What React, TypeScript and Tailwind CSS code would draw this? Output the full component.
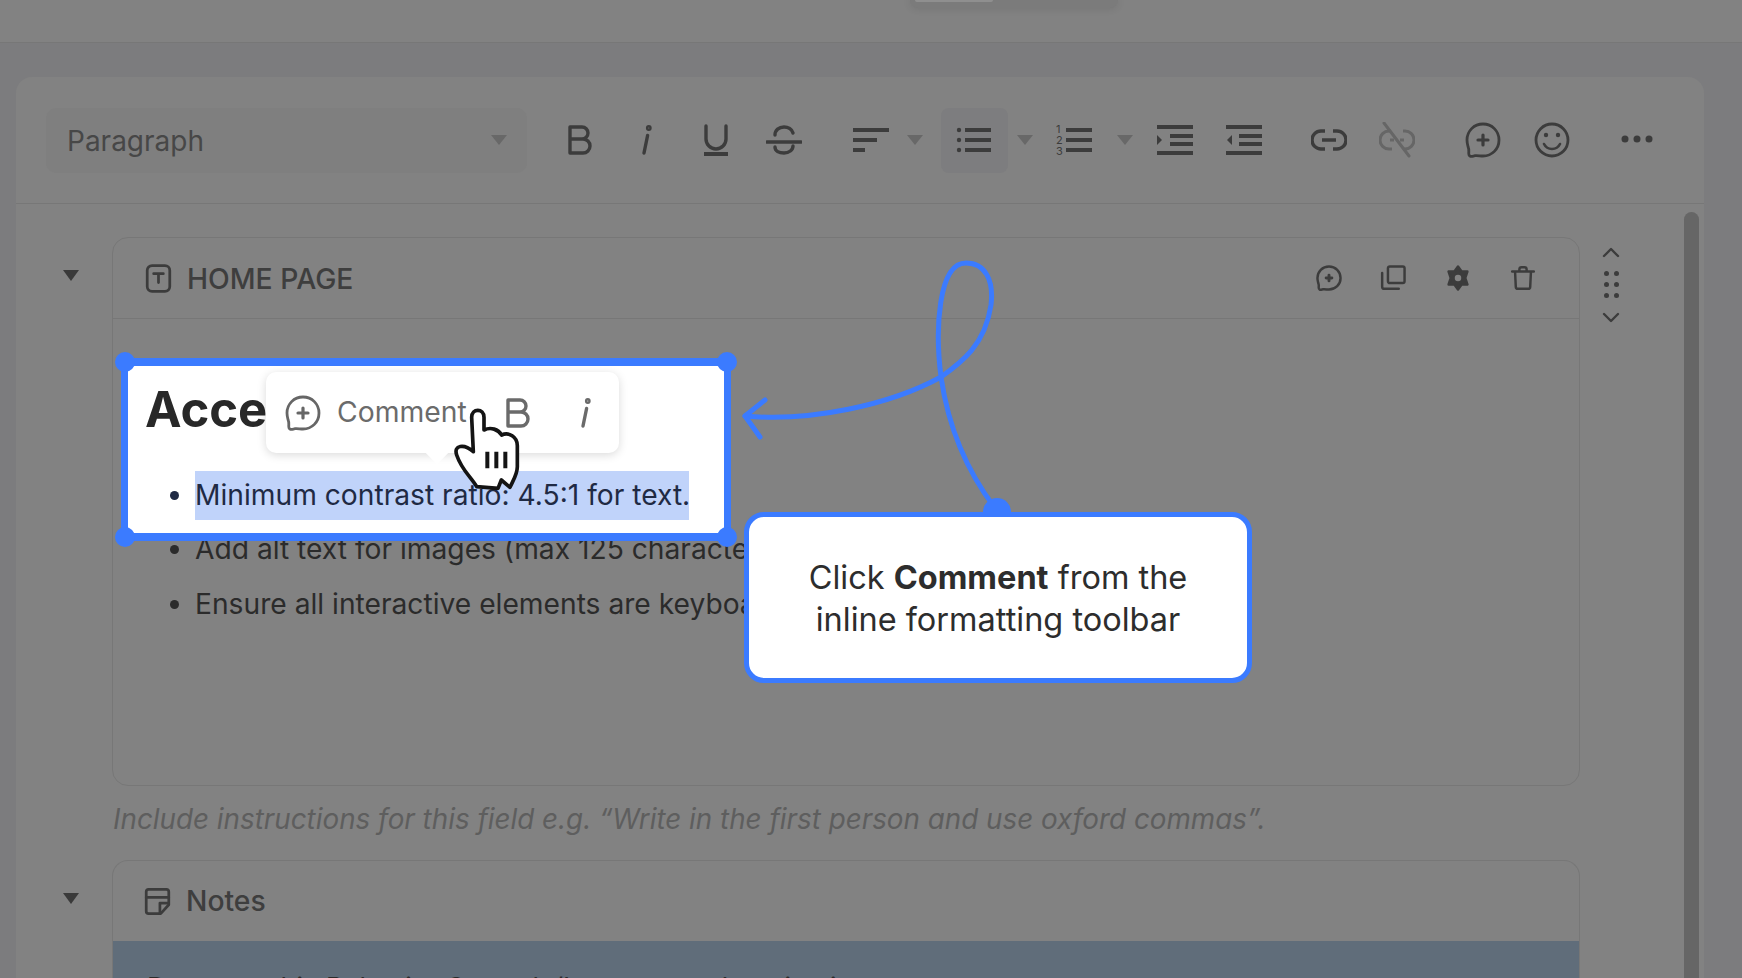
import { ReactNode } from 'react';

const INK = '#3c3c3c';
const BLUE = '#3b7bff';

function Icon({ size = 36, className, children, color = INK }: { size?: number; className?: string; children: ReactNode; color?: string }) {
  return (
    <svg
      width={size}
      height={size}
      viewBox="0 0 36 36"
      fill="none"
      stroke={color}
      strokeWidth={3.4}
      strokeLinecap="round"
      strokeLinejoin="round"
      className={`shrink-0 ${className ?? ''}`}
    >
      {children}
    </svg>
  );
}

function Caret({ className }: { className?: string }) {
  return (
    <svg width={16} height={10} viewBox="0 0 16 10" className={`shrink-0 ${className ?? ''}`}>
      <path d="M0 0h16L8 10z" fill="#686868" />
    </svg>
  );
}

const Bar = ({ x, y, w }: { x: number; y: number; w: number }) => <rect x={x} y={y} width={w} height={4} fill={INK} stroke="none" />;

const BoldGlyph = () => <path d="M8 5v26h13a7 7 0 0 0 0-14H8m0 0V5h12a6 6 0 0 1 0 12" />;

const ItalicGlyph = () => (
  <>
    <path d="M20.6 13.5 17 31" />
    <circle cx={21.8} cy={6} r={1.2} />
  </>
);

const BUBBLE = 'M18 2c9 0 16 7 16 16s-7 16-16 16c-3 0-5.500-.6-8-.3-2 .3-3.500 1-5 .4-1.600-.8-1.400-2.800-1.200-4.600.2-1.800 0-3-.8-5C2.500 22.500 2 20 2 18 2 9 9 2 18 2z';

function CommentGlyph() {
  return (
    <>
      <path d={BUBBLE} strokeWidth={2.8} />
      <path d="M18 13v10M13 18h10" strokeWidth={3.2} />
    </>
  );
}

function Toolbar() {
  return (
    <div className="flex h-[127px] items-center border-b border-[#777777] pl-[30px]">
      <div className="flex h-[65px] w-[481px] shrink-0 items-center justify-between rounded-[10px] bg-[#7f7f7f] pl-[21px] pr-[20px]">
        <span className="pt-[2px] text-[28px] text-[#474747]">Paragraph</span>
        <Caret />
      </div>
      <Icon className="ml-[35px]"><BoldGlyph /></Icon>
      <Icon className="ml-[29px]"><ItalicGlyph /></Icon>
      <Icon className="ml-[35px]">
        <path d="M8 4v13a10 10 0 0 0 20 0V4" />
        <Bar x={6} y={30} w={24} />
      </Icon>
      <Icon className="ml-[32px]">
        <path d="M27 11c-1-4-5-6-9-6-5 0-9 3-9 8M9 25c0 4 4 6 9 6s9-3 9-7" />
        <path d="M1 20h34" />
      </Icon>
      <Icon className="ml-[51px]">
        <Bar x={0} y={6} w={36} />
        <Bar x={0} y={16} w={24} />
        <Bar x={0} y={26} w={12} />
      </Icon>
      <Caret className="ml-[18px]" />
      <div className="ml-[18px] flex h-[65px] w-[67px] shrink-0 items-center justify-center rounded-[8px] bg-[#7d7d7f] pr-[4px]">
        <Icon>
          <circle cx={4} cy={8} r={2.200} fill={INK} stroke="none" />
          <circle cx={4} cy={18} r={2.200} fill={INK} stroke="none" />
          <circle cx={4} cy={28} r={2.200} fill={INK} stroke="none" />
          <Bar x={10} y={6} w={26} />
          <Bar x={10} y={16} w={26} />
          <Bar x={10} y={26} w={26} />
        </Icon>
      </div>
      <Caret className="ml-[9px]" />
      <Icon className="ml-[23px]">
        <text x={0} y={11} fontSize={11} fill={INK} stroke="none" fontFamily="Inter, sans-serif">1</text>
        <text x={0} y={22} fontSize={11} fill={INK} stroke="none" fontFamily="Inter, sans-serif">2</text>
        <text x={0} y={33} fontSize={11} fill={INK} stroke="none" fontFamily="Inter, sans-serif">3</text>
        <Bar x={10} y={6} w={26} />
        <Bar x={10} y={16} w={26} />
        <Bar x={10} y={26} w={26} />
      </Icon>
      <Caret className="ml-[25px]" />
      <Icon className="ml-[24px]">
        <Bar x={0} y={3} w={36} />
        <Bar x={13} y={12} w={23} />
        <Bar x={13} y={20} w={23} />
        <Bar x={0} y={29} w={36} />
        <path d="M0 13l5 5-5 5z" fill={INK} stroke="none" />
      </Icon>
      <Icon className="ml-[33px]">
        <Bar x={0} y={3} w={36} />
        <Bar x={13} y={12} w={23} />
        <Bar x={13} y={20} w={23} />
        <Bar x={0} y={29} w={36} />
        <path d="M6 13l-5 5 5 5z" fill={INK} stroke="none" />
      </Icon>
      <Icon className="ml-[49px]">
        <path d="M14 9H10a9 9 0 0 0 0 18h4M22 9h4a9 9 0 0 1 0 18h-4M11 18h14" strokeLinecap="butt" />
      </Icon>
      <Icon className="ml-[32px]" color="#666666">
        <path d="M12 9H10a9 9 0 0 0 0 18h3M24 9h2a9 9 0 0 1 0 18h-2M11 18h4M21 18h4" strokeLinecap="butt" strokeWidth={3} />
        <path d="M5 1l25 33" strokeWidth={3} />
      </Icon>
      <Icon className="ml-[50px]"><CommentGlyph /></Icon>
      <Icon className="ml-[33px]">
        <circle cx={18} cy={18} r={16} strokeWidth={2.8} />
        <circle cx={12} cy={13} r={2.200} fill={INK} stroke="none" />
        <circle cx={24} cy={13} r={2.200} fill={INK} stroke="none" />
        <path d="M10 22c2 4 5 5 8 5s6-1 8-5" strokeWidth={2.6} />
      </Icon>
      <Icon className="ml-[49px]">
        <circle cx={6} cy={17} r={3.500} fill={INK} stroke="none" />
        <circle cx={18} cy={17} r={3.500} fill={INK} stroke="none" />
        <circle cx={30} cy={17} r={3.500} fill={INK} stroke="none" />
      </Icon>
    </div>
  );
}

function Triangle({ className }: { className?: string }) {
  return (
    <svg width={16} height={11} viewBox="0 0 16 11" className={className}>
      <path d="M0 0h16L8 11z" fill="#3a3a3a" />
    </svg>
  );
}

function BlockActions() {
  return (
    <div className="ml-auto flex items-center pr-[43px]">
      <Icon size={26}>
        <path d={BUBBLE} />
        <path d="M18 14v8M14 18h8" strokeWidth={4} />
      </Icon>
      <Icon size={26} className="ml-[38px]">
        <rect x={11} y={2} width={23} height={23} rx={2.500} />
        <path d="M3 11v19c0 2 1 3 3 3h20" />
      </Icon>
      <Icon size={26} className="ml-[39px]">
        <path d="M18 2l5 7h8l-3 9 3 9h-8l-5 7-5-7H5l3-9-3-9h8z" fill={INK} />
        <circle cx={18} cy={18} r={4.500} fill="#828282" stroke="none" />
      </Icon>
      <Icon size={26} className="ml-[39px]">
        <path d="M3 9h30M13 9V6c0-2 1-3 3-3h4c2 0 3 1 3 3v3M7 9l1 21c0 2 1 3 3 3h14c2 0 3-1 3-3l1-21" />
      </Icon>
    </div>
  );
}

function MoveRail() {
  return (
    <div className="ml-[18px] flex w-[26px] flex-col items-center pt-[9px]">
      <svg width={18} height={12} viewBox="0 0 18 12" fill="none" stroke={INK} strokeWidth={2.4} strokeLinecap="round" strokeLinejoin="round">
        <path d="M2 10l7-7 7 7" />
      </svg>
      <div className="mt-[13px] grid grid-cols-2 gap-x-[5px] gap-y-[6px]">
        {[0, 1, 2, 3, 4, 5].map((n) => (
          <span key={n} className="h-[5px] w-[5px] rounded-full bg-[#3c3c3c]" />
        ))}
      </div>
      <svg width={18} height={12} viewBox="0 0 18 12" fill="none" stroke={INK} strokeWidth={2.4} strokeLinecap="round" strokeLinejoin="round" className="mt-[14px]">
        <path d="M2 2l7 7 7-7" />
      </svg>
    </div>
  );
}

function Handle({ className }: { className: string }) {
  return <span className={`absolute h-[20px] w-[20px] rounded-full bg-[#3b7bff] ${className}`} />;
}

function SelectionBox() {
  return (
    <div className="absolute left-[121px] top-[358px] h-[183px] w-[610px] rounded-[6px] border-x-[7px] border-y-[8px] border-[#3b7bff] bg-white">
      <h1 className="pl-[17px] pt-[14px] text-[49px] font-bold leading-[60px] text-[#282828]">Acce</h1>
      <ul className="mt-[31px] list-disc pl-[67px] text-[28.200px] leading-[49px] text-[#1f2a44]">
        <li>
          <span className="block w-[494px] whitespace-nowrap bg-[#c0d3fa]">Minimum contrast ratio: 4.5:1 for text.</span>
        </li>
      </ul>
      <Handle className="-left-[13px] -top-[14px]" />
      <Handle className="-right-[13px] -top-[14px]" />
      <Handle className="-left-[13px] -bottom-[14px]" />
      <Handle className="-right-[13px] -bottom-[14px]" />

      {/* inline formatting toolbar */}
      <div className="absolute left-[138px] top-[6px] flex h-[81px] w-[353px] items-center rounded-[10px] bg-white pl-[19px] shadow-[0_2px_10px_rgba(0,0,0,0.15)]">
        <span className="absolute left-[161px] top-[68px] h-[20px] w-[20px] rotate-45 bg-white" />
        <Icon>
          <g stroke="#666666"><CommentGlyph /></g>
        </Icon>
        <span className="ml-[16px] text-[28.300px] text-[#6b6b6b]">Comment</span>
        <Icon className="ml-[33px]" color="#6a6a6a"><BoldGlyph /></Icon>
        <Icon className="ml-[30px]" color="#6a6a6a"><ItalicGlyph /></Icon>
      </div>
    </div>
  );
}

function HandCursor() {
  return (
    <svg width={220} height={120} viewBox="0 0 660 360" className="pointer-events-none absolute left-[430px] top-[380px]">
      <path
        d="M125 112C125 84 162 84 162 112L162 150C182 140 205 148 215 165C236 155 262 170 262 197L262 260C262 282 250 300 240 322L214 300L204 325L140 320C122 290 95 270 80 225C70 195 102 190 130 215Z"
        fill="white"
        stroke="#141414"
        strokeWidth={11}
        strokeLinejoin="round"
      />
      <path d="M172 215v50M199 215v50M226 215v50" stroke="#141414" strokeWidth={12} />
    </svg>
  );
}

export default function App() {
  return (
    <div className="relative h-[978px] w-[1742px] overflow-hidden bg-[#7c7c7e] font-['Inter',sans-serif]">
      <div className="h-[43px] border-b border-[#777777] bg-[#828282]">
        <div className="ml-[910px] h-[8px] w-[208px] rounded-b-[16px] bg-[#7b7b7b] pl-[5px] shadow-[0_0_8px_rgba(0,0,0,0.12)]">
          <div className="h-[2px] w-[78px] rounded-b-full bg-[#8f8f8f]" />
        </div>
      </div>

      <div className="ml-[16px] mt-[34px] h-[901px] w-[1688px] rounded-t-[16px] bg-[#828282]">
        <Toolbar />
        <div className="flex">
          <div className="w-[1668px] pt-[33px]">
            <div className="flex">
              <div className="w-[96px] pl-[47px] pt-[33px]">
                <Triangle />
              </div>
              <div className="h-[549px] w-[1468px] rounded-[16px] border border-[#777777]">
                <div className="flex h-[81px] items-center border-b border-[#777777] pl-[31px]">
                  <Icon size={29}>
                    <rect x={4} y={2} width={28} height={32} rx={6} />
                    <path d="M12 12h12M18 12v11" />
                  </Icon>
                  <span className="ml-[14px] pt-[2px] text-[28.300px] font-medium text-[#3e3e3e]">HOME PAGE</span>
                  <BlockActions />
                </div>
                <ul className="list-disc pl-[82px] pt-[203px] text-[28.200px] leading-[54.500px] text-[#2b2b2b]">
                  <li className="whitespace-nowrap">Add alt text for images (max 125 characters).</li>
                  <li className="whitespace-nowrap">Ensure all interactive elements are keyboard accessible.</li>
                </ul>
              </div>
              <MoveRail />
            </div>
            <p className="ml-[97px] mt-[15px] whitespace-nowrap text-[27.800px] italic leading-[36px] text-[#5e5e5e]">
              Include instructions for this field e.g. “Write in the first person and use oxford commas”.
            </p>
            <div className="mt-[23px] flex">
              <div className="w-[96px] pl-[47px] pt-[33px]">
                <Triangle />
              </div>
              <div className="w-[1468px] overflow-hidden rounded-t-[16px] border border-b-0 border-[#777777]">
                <div className="flex h-[80px] items-center pl-[30px]">
                  <Icon size={29}>
                    <path d="M7 3h22c2 0 3 1 3 3v16l-10 11H7c-2 0-3-1-3-3V6c0-2 1-3 3-3z" />
                    <path d="M4 13h28M32 20H21v13" />
                  </Icon>
                  <span className="ml-[14px] text-[28.300px] font-medium text-[#3e3e3e]">Notes</span>
                </div>
                <div className="h-[60px] bg-[#606d7a] pl-[34px] pt-[29px] text-[27px] leading-[36px] text-[#2b2b2b]">
                  Demographic Behavior Controls/Interests and motivations
                </div>
              </div>
            </div>
          </div>
          <div className="mt-[8px] h-[800px] w-[15px] rounded-t-full bg-[#666666]" />
        </div>
      </div>

      <svg width={290} height={270} viewBox="730 250 290 270" fill="none" stroke={BLUE} className="pointer-events-none absolute left-[730px] top-[250px]">
        <path
          d="M995 508C966 470 948 425 941 377C935 330 938 263 966 263C985 263 994 280 991 305C985 345 962 362 941 377C890 405 810 422 745 416"
          strokeWidth={5}
          strokeLinecap="round"
        />
        <path d="M765 400L745 416L760 437" strokeWidth={5} strokeLinecap="round" strokeLinejoin="round" />
        <circle cx={997} cy={512} r={14} fill={BLUE} stroke="none" />
      </svg>

      <SelectionBox />
      <HandCursor />

      <div className="absolute left-[744px] top-[512px] flex h-[171px] w-[508px] flex-col items-center justify-center rounded-[20px] border-[5px] border-[#3b7bff] bg-white pt-[2px] text-[32.500px] leading-[42px] text-[#2d2d2d]">
        <p>
          Click <strong className="font-bold">Comment</strong> from the
        </p>
        <p>inline formatting toolbar</p>
      </div>
    </div>
  );
}
